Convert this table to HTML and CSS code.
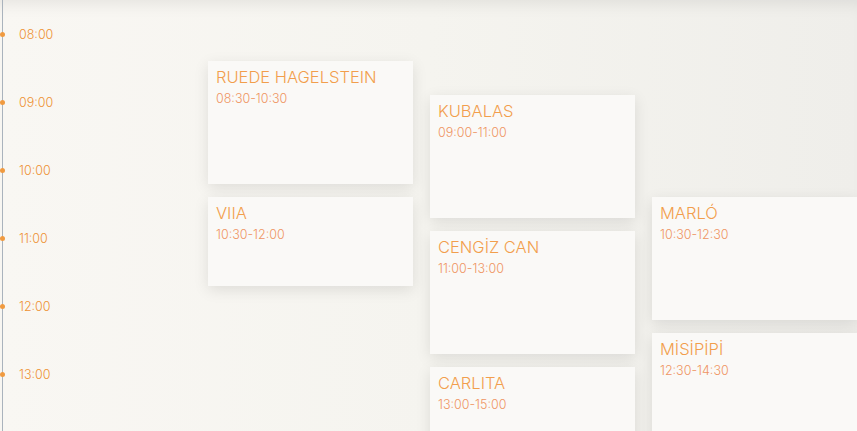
FILE: index.html
```html
<!DOCTYPE html>
<html lang="en">
<head>
<meta charset="utf-8">
<title>Schedule</title>
<link rel="stylesheet" href="styles.css">
</head>
<body>
<div class="page">
  <div class="timeline">
    <div class="hour"><span class="dot"></span><span class="label">08:00</span></div>
    <div class="hour"><span class="dot"></span><span class="label">09:00</span></div>
    <div class="hour"><span class="dot"></span><span class="label">10:00</span></div>
    <div class="hour"><span class="dot"></span><span class="label">11:00</span></div>
    <div class="hour"><span class="dot"></span><span class="label">12:00</span></div>
    <div class="hour"><span class="dot"></span><span class="label">13:00</span></div>
  </div>
  <div class="board">
    <div class="col">
      <div class="card r2-s4"><div class="title">RUEDE HAGELSTEIN</div><div class="time">08:30-10:30</div></div>
      <div class="card r6-s3"><div class="title">VIIA</div><div class="time">10:30-12:00</div></div>
    </div>
    <div class="col">
      <div class="card r3-s4"><div class="title">KUBALAS</div><div class="time">09:00-11:00</div></div>
      <div class="card r7-s4"><div class="title">CENGİZ CAN</div><div class="time">11:00-13:00</div></div>
      <div class="card r11-s4"><div class="title">CARLITA</div><div class="time">13:00-15:00</div></div>
    </div>
    <div class="col">
      <div class="card r6-s4"><div class="title">MARLÓ</div><div class="time">10:30-12:30</div></div>
      <div class="card r10-s4"><div class="title">MİSİPİPİ</div><div class="time">12:30-14:30</div></div>
    </div>
  </div>
</div>
</body>
</html>
```

FILE: styles.css
```css
html, body {
  margin: 0;
  padding: 0;
  height: 100%;
  overflow: hidden;
}
body {
  font-family: "Inter", "Lato", sans-serif;
  background: linear-gradient(to right, #f9f7f3 0%, #f5f4ef 50%, #efeeea 100%);
}
.page {
  display: flex;
  height: 431px;
  overflow: hidden;
  box-shadow: inset 0 14px 16px -10px rgba(0, 0, 0, 0.08);
}
.timeline {
  width: 188px;
  margin-left: 2px;
  border-left: 1px solid #aab3bd;
  padding-top: 27px;
  display: flex;
  flex-direction: column;
  gap: 54px;
  flex: none;
}
.hour {
  height: 14px;
  display: flex;
  align-items: center;
}
.dot {
  width: 5px;
  height: 5px;
  border-radius: 50%;
  background: #f09a40;
  margin-left: -3px;
}
.label {
  margin-left: 14px;
  padding-top: 2px;
  font-size: 12.5px;
  font-weight: 300;
  color: #ee9132;
  line-height: 14px;
}
.board {
  margin-left: 17px;
  display: grid;
  grid-template-columns: repeat(3, 205px);
  column-gap: 17px;
  padding-top: 27px;
  align-items: start;
}
.col {
  display: grid;
  grid-template-rows: repeat(14, 34px);
}
.card {
  background: #faf9f7;
  margin-bottom: 13px;
  box-shadow: 0 4px 14px rgba(0, 0, 0, 0.1);
  padding: 5px 8px;
  box-sizing: border-box;
}
.title {
  font-size: 16.5px;
  font-weight: 350;
  color: #f29e4c;
  line-height: 22px;
}
.time {
  margin-top: 2px;
  font-size: 12.5px;
  font-weight: 300;
  color: #ef9462;
  line-height: 18px;
}
.r2-s4 { grid-row: 2 / span 4; }
.r6-s3 { grid-row: 6 / span 3; }
.r3-s4 { grid-row: 3 / span 4; }
.r7-s4 { grid-row: 7 / span 4; }
.r11-s4 { grid-row: 11 / span 4; }
.r6-s4 { grid-row: 6 / span 4; }
.r10-s4 { grid-row: 10 / span 4; }
```
